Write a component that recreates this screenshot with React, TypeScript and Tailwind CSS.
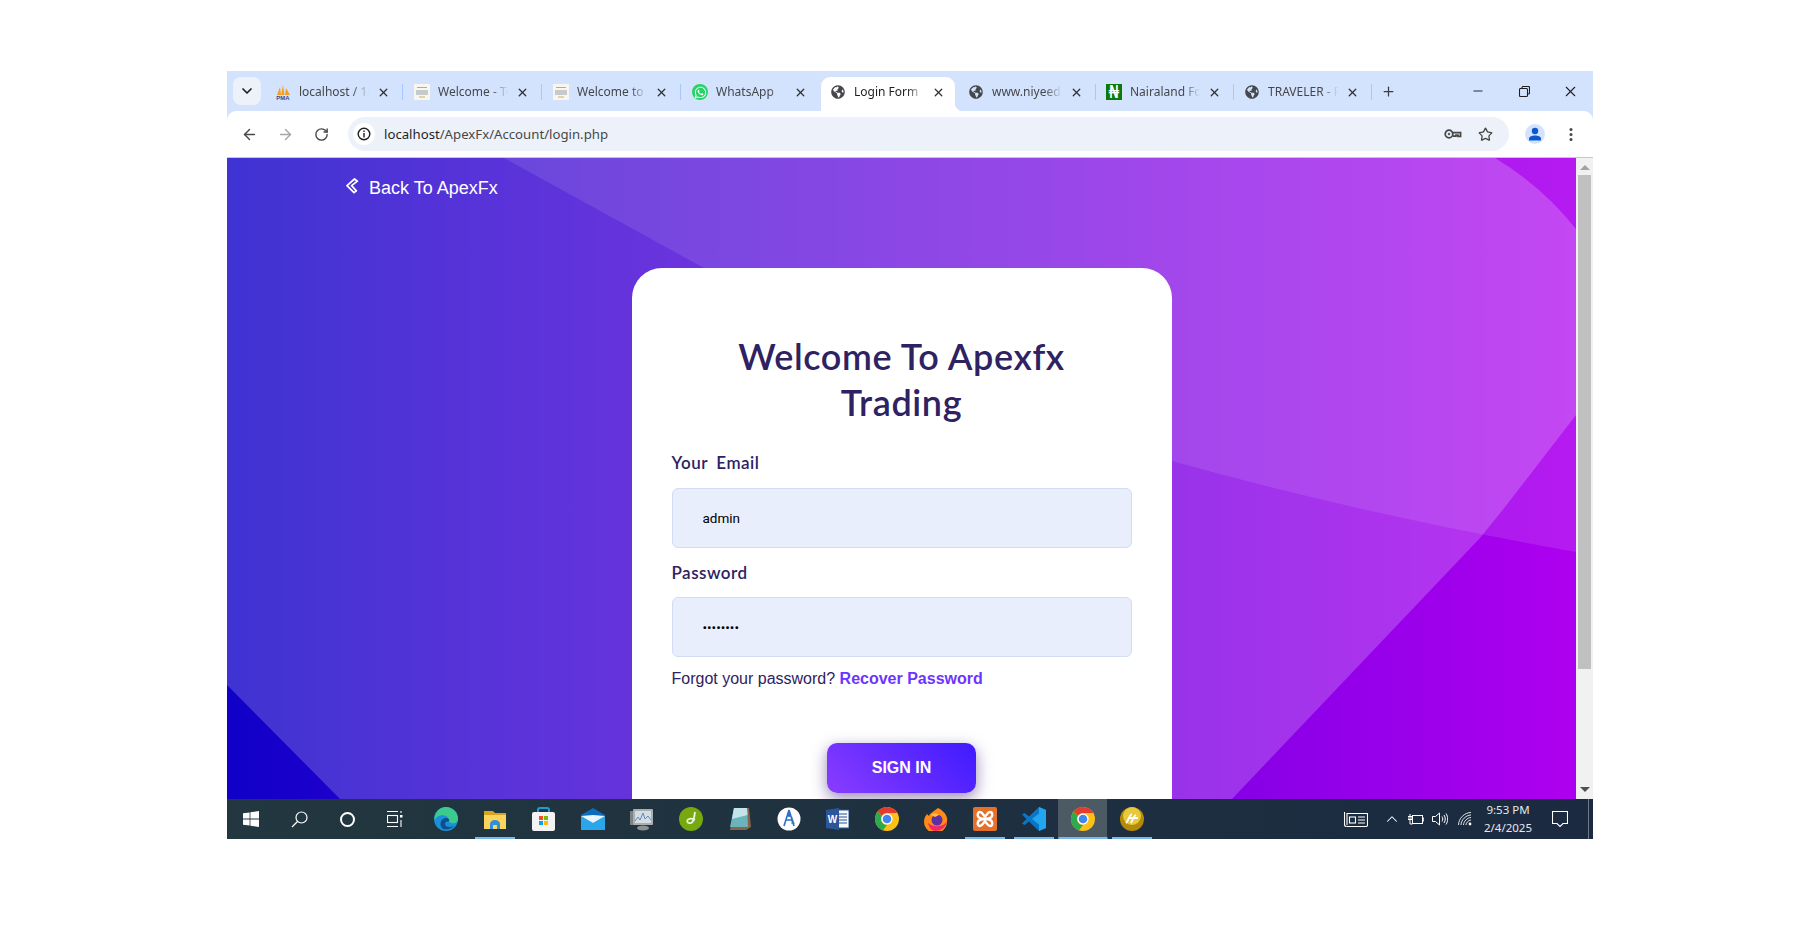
import { ArrowLeft, ArrowRight, ChevronDown, ChevronUp, EllipsisVertical, Minus, Plus, RotateCw, Star, X } from "lucide-react";
import { FaGlobeAmericas, FaWhatsapp } from "react-icons/fa";

const UI_FONT = "font-['Noto_Sans',sans-serif]";
const HEAD_FONT = "font-['Lato',sans-serif]";
const BODY_FONT = "font-['Liberation_Sans',Arial,sans-serif]";

function Globe() {
  return <FaGlobeAmericas className="h-[14px] w-[14px] text-[#45474a]" />;
}

function PmaIcon() {
  return (
    <svg width="16" height="16" viewBox="0 0 16 16">
      <path d="M2 11 L5 3 L6 11Z M6 11 L8 1 L9.5 11Z M10 11 L11 4 L15 11Z" fill="#f59e1c" />
      <text x="8" y="15.5" textAnchor="middle" fontSize="6" fontWeight="700" fill="#3b4a8c" fontFamily="Liberation Sans">PMA</text>
    </svg>
  );
}

function DocIcon() {
  return (
    <svg width="16" height="16" viewBox="0 0 16 16">
      <rect width="16" height="16" fill="#f8f6ee" />
      <rect x="3" y="3" width="10" height="1" fill="#a5adb0" />
      <rect x="2" y="6" width="12" height="5" fill="#c6cacb" />
      <rect x="5" y="12" width="6" height="2" fill="#e0d4b0" />
    </svg>
  );
}

function WhatsIcon() {
  return (
    <span className="flex h-4 w-4 items-center justify-center rounded-full bg-[#25d366]">
      <FaWhatsapp className="h-[13px] w-[13px] text-[#fff]" />
    </span>
  );
}

function NairaIcon() {
  return (
    <span className="flex h-4 w-4 items-center justify-center overflow-hidden bg-[#0a7a0a] font-['DejaVu_Sans',sans-serif] text-[17px] leading-none font-normal text-white">₦</span>
  );
}

const TABS = [
  { title: "localhost / 127.0.0.1", icon: <PmaIcon />, slot: "w-[139px]", sep: true },
  { title: "Welcome - Tourly", icon: <DocIcon />, slot: "w-[139px]", sep: true },
  { title: "Welcome to Apex", icon: <DocIcon />, slot: "w-[139px]", sep: true },
  { title: "WhatsApp", icon: <WhatsIcon />, slot: "w-[138px]", sep: false },
  { title: "Login Form | ApexFx", icon: <Globe />, slot: "w-[138px]", active: true, sep: false },
  { title: "www.niyeedesigns", icon: <Globe />, slot: "w-[138px]", sep: true },
  { title: "Nairaland Forum", icon: <NairaIcon />, slot: "w-[138px]", sep: true },
  { title: "TRAVELER - Free", icon: <Globe />, slot: "w-[138px]", sep: true },
];

function Tab({ title, icon, active, sep, slot }: { title: string; icon: React.ReactNode; active?: boolean; sep: boolean; slot: string }) {
  return (
    <div className={`relative flex h-[34px] shrink-0 items-center pb-[4px] ${slot}`}>
      {active && (
        <>
          <span className="absolute top-0 bottom-0 left-[-1px] w-[134px] rounded-t-[9px] bg-white" />
          <span className="absolute bottom-0 left-[133px] h-2 w-2 bg-[radial-gradient(circle_at_100%_0,#d3e3fd_8px,#ffffff_8.5px)]" />
        </>
      )}
      <span className="relative ml-2 flex w-4 shrink-0 items-center justify-center">{icon}</span>
      <span className={`relative ml-2 w-[70px] shrink-0 overflow-hidden text-[12px] leading-4 whitespace-nowrap [mask-image:linear-gradient(to_right,black_76%,transparent)] ${active ? "text-[#1f1f1f]" : "text-[#45474a]"} ${UI_FONT}`}>
        {title}
      </span>
      <X className="relative ml-[8px] h-[13px] w-[13px] shrink-0 text-[#2f3133]" strokeWidth={2.4} />
      {sep && <span className="relative ml-[12px] h-4 w-px shrink-0 bg-[#a8c7fa]" />}
    </div>
  );
}

function TabStrip() {
  return (
    <div className="flex h-10 items-end bg-[#d3e3fd] text-[#1f1f1f]">
      <div className="mb-[6px] ml-[6px] flex h-7 w-7 shrink-0 items-center justify-center rounded-lg bg-[#edf2fa]">
        <ChevronDown className="h-4 w-4" strokeWidth={2.6} />
      </div>
      <div className="ml-[6px] flex">
        {TABS.map((t) => (
          <Tab key={t.title} {...t} />
        ))}
      </div>
      <div className="mb-[6px] flex h-7 w-7 shrink-0 items-center justify-center">
        <Plus className="h-[15px] w-[15px] text-[#3b3d40]" strokeWidth={2} />
      </div>
      <div className="mb-[6px] ml-auto flex h-7">
        <span className="flex w-[46px] items-center justify-center"><Minus className="h-[14px] w-[14px]" strokeWidth={1.6} /></span>
        <span className="flex w-[46px] items-center justify-center">
          <svg width="11" height="11" viewBox="0 0 11 11" fill="none" stroke="#1f1f1f" strokeWidth="1.1">
            <rect x="0.5" y="2.5" width="8" height="8" rx="1" />
            <path d="M3 2.5V1.5a1 1 0 0 1 1-1h5.5a1 1 0 0 1 1 1V7a1 1 0 0 1-1 1H8.5" />
          </svg>
        </span>
        <span className="flex w-[46px] items-center justify-center"><X className="h-[17px] w-[17px]" strokeWidth={1.5} /></span>
      </div>
    </div>
  );
}

function KeyIcon() {
  return (
    <svg width="18" height="12" viewBox="0 0 18 12" fill="none" stroke="#474747" strokeWidth="1.7">
      <circle cx="5" cy="6" r="3.8" />
      <circle cx="5" cy="6" r="1" fill="#474747" strokeWidth="0.5" />
      <path d="M8.8 4.6H16.6V8.4H14V7H12V8.2H9" />
    </svg>
  );
}

function Toolbar() {
  return (
    <div className="flex h-[47px] items-center rounded-t-[9px] border-b border-[#c8c8c8] bg-white text-[#474747]">
      <span className="ml-1 flex w-9 justify-center"><ArrowLeft className="h-[17px] w-[17px]" strokeWidth={2} /></span>
      <span className="flex w-9 justify-center"><ArrowRight className="h-[17px] w-[17px] text-[#a6a6a6]" strokeWidth={2} /></span>
      <span className="flex w-9 justify-center"><RotateCw className="h-[15px] w-[15px]" strokeWidth={2.2} /></span>
      <div className="ml-[9px] flex h-[34px] flex-1 items-center rounded-full bg-[#edf2fa] pr-[16px] pl-[5px]">
        <span className="flex h-[22px] w-[22px] items-center justify-center rounded-full bg-white">
          <svg width="14" height="14" viewBox="0 0 14 14" fill="none" stroke="#1f1f1f" strokeWidth="1.4">
            <circle cx="7" cy="7" r="5.8" />
            <path d="M7 6V10.4M7 3.4V5" />
          </svg>
        </span>
        <span className={`ml-[9px] text-[13.2px] leading-5 text-[#474747] ${UI_FONT}`}>
          <span className="text-[#1f1f1f]">localhost</span>/ApexFx/Account/login.php
        </span>
        <span className="ml-auto"><KeyIcon /></span>
        <Star className="ml-[16px] h-[15px] w-[15px] text-[#474747]" strokeWidth={2.1} />
      </div>
      <span className="ml-4 flex h-5 w-5 items-center justify-center rounded-full bg-[#d3e3fd]">
        <svg width="14" height="14" viewBox="0 0 14 14" fill="#0b57d0">
          <circle cx="7" cy="4" r="3.2" />
          <path d="M1 13.5V11.6C1 9.6 4 8.5 7 8.5s6 1.1 6 3.1v1.9Z" />
        </svg>
      </span>
      <EllipsisVertical className="ml-[14px] h-[17px] w-6 text-[#474747]" strokeWidth={2.4} />
      <span className="w-[10px]" />
    </div>
  );
}

function BackgroundArt() {
  return (
    <svg className="absolute inset-0 h-full w-full" viewBox="0 0 1349 641" preserveAspectRatio="none">
      <defs>
        <linearGradient id="pageBase" x1="0" y1="0" x2="1" y2="0">
          <stop offset="0" stopColor="#1000c8" />
          <stop offset="1" stopColor="#ae00f0" />
        </linearGradient>
      </defs>
      <rect width="1349" height="641" fill="url(#pageBase)" />
      <path d="M0 0H1268Q1315 28 1349 71V257L1278 349L1253 380L1005 641H113L0 527Z" fill="#fff" fillOpacity="0.2" />
      <path d="M277 0L477 110L945 303Q1130 355 1349 394V0Z" fill="#fff" fillOpacity="0.1" />
    </svg>
  );
}

function BackChevrons() {
  return (
    <svg className="-mt-[4px]" width="13" height="16" viewBox="0 0 13 16" fill="none" stroke="#fff" strokeWidth="1.7" strokeLinejoin="round">
      <path d="M8.5 1L1 7.6L8 14.6L10.4 12.8L5.6 7.7L11.4 3.2Z" />
    </svg>
  );
}

function LoginCard() {
  const label = `block h-6 text-[17px] leading-6 font-semibold tracking-[0.5px] [word-spacing:4px] text-[#2e2262] ${HEAD_FONT}`;
  const input = "block h-[60px] w-full rounded-[6px] border border-[#d3dcf5] bg-[#e8eefc] pl-[30px] font-['Roboto',sans-serif] text-[13.5px] text-black outline-none";
  return (
    <div className="relative mx-auto mt-[50px] w-[540px] rounded-[30px] bg-white px-10 pt-[65px] pb-10">
      <h1 className={`text-center text-[36px] leading-[46px] font-semibold tracking-[0.6px] text-[#2e2262] ${HEAD_FONT}`}>
        Welcome To Apexfx
        <br />
        Trading
      </h1>
      <label className={`${label} mt-[26px] mb-[13px]`}>Your Email</label>
      <input className={input} type="text" readOnly value="admin" />
      <label className={`${label} mt-[13px] mb-3`}>Password</label>
      <input className={input} type="password" readOnly value="admin123" />
      <p className={`mt-[10px] text-[16px] leading-6 text-[#2e2262] ${BODY_FONT}`}>
        Forgot your password? <a className="font-bold text-[#6c35ff]">Recover Password</a>
      </p>
      <button className={`mx-auto mt-[52px] block h-[50px] w-[149px] rounded-[10px] bg-[linear-gradient(45deg,#8a3dff,#3f1aff)] text-[16px] font-bold text-white shadow-[0_5px_15px_rgba(50,20,110,0.5)] ${BODY_FONT}`}>
        SIGN IN
      </button>
    </div>
  );
}

function Scrollbar() {
  return (
    <div className="flex w-[17px] shrink-0 flex-col items-center bg-[#f1f1f1]">
      <span className="mt-[7px] h-0 w-0 border-x-[5px] border-b-[5px] border-x-transparent border-b-[#a3a3a3]" />
      <span className="mt-[5px] h-[494px] w-[13px] bg-[#c0c0c0]" />
      <span className="mt-auto mb-[7px] h-0 w-0 border-x-[5px] border-t-[5px] border-x-transparent border-t-[#505050]" />
    </div>
  );
}

function ChromeLogo() {
  return (
    <svg width="24" height="24" viewBox="0 0 24 24">
      <circle cx="12" cy="12" r="12" fill="#fbc116" />
      <path d="M12 0A12 12 0 0 1 22.4 6H12A6 6 0 0 0 6.8 9L2.6 4.5A12 12 0 0 1 12 0Z" fill="#e33b2e" />
      <path d="M2.6 4.5L6.8 9A6 6 0 0 0 12 18L8 23.3A12 12 0 0 1 2.6 4.5Z" fill="#2da94f" />
      <circle cx="12" cy="12" r="5.6" fill="#fff" />
      <circle cx="12" cy="12" r="4.3" fill="#3f86f4" />
    </svg>
  );
}

const APPS: { name: string; open?: boolean; active?: boolean; icon: React.ReactNode }[] = [
  {
    name: "edge",
    icon: (
      <svg width="24" height="24" viewBox="0 0 24 24">
        <circle cx="12" cy="12" r="12" fill="#1b8fd8" />
        <path d="M12 0A12 12 0 0 1 24 12C24 16 20 17 17 16C14 15 16 11 12 9C7 7 2 10 0.5 13A12 12 0 0 1 12 0Z" fill="#3ccb8c" />
        <path d="M9 22C5 19 6 12 11 11C14 10.5 16 12 15 14C14 15 11 14 11 17C11 20 16 21 20 19A12 12 0 0 1 9 22Z" fill="#0b4f8f" />
      </svg>
    ),
  },
  {
    name: "explorer",
    open: true,
    icon: (
      <svg width="22" height="20" viewBox="0 0 22 20">
        <path d="M0 2H9L11 4H22V20H0Z" fill="#d9a322" />
        <rect y="6" width="22" height="14" fill="#fcd45c" />
        <path d="M6 15C6 13 8 11 11 11S16 13 16 15V20H6Z" fill="#2f8fd8" />
        <rect x="9" y="16" width="4" height="4" fill="#fcd45c" />
      </svg>
    ),
  },
  {
    name: "store",
    icon: (
      <svg width="23" height="24" viewBox="0 0 23 24">
        <path d="M6 6V3a2 2 0 0 1 2-2h7a2 2 0 0 1 2 2v3" fill="none" stroke="#17a0d8" strokeWidth="2" />
        <rect y="5" width="23" height="19" rx="2" fill="#f3f3f3" />
        <rect x="7" y="9" width="4" height="4" fill="#f25022" />
        <rect x="12" y="9" width="4" height="4" fill="#7fba00" />
        <rect x="7" y="14" width="4" height="4" fill="#00a4ef" />
        <rect x="12" y="14" width="4" height="4" fill="#ffb900" />
      </svg>
    ),
  },
  {
    name: "mail",
    icon: (
      <svg width="24" height="22" viewBox="0 0 24 22">
        <path d="M0 7L12 0L24 7V22H0Z" fill="#0f6cbd" />
        <path d="M0 8L12 15L24 8V22H0Z" fill="#2aa7ea" />
        <path d="M0 8L12 15L24 8L12 7Z" fill="#eaf6fd" />
      </svg>
    ),
  },
  {
    name: "monitor",
    icon: (
      <svg width="23" height="23" viewBox="0 0 23 23">
        <rect y="3" width="6" height="14" fill="#7d8285" />
        <rect x="3" y="1" width="20" height="16" rx="1" fill="#a9aeb1" />
        <rect x="5" y="3" width="16" height="12" fill="#d5dde2" />
        <path d="M5 13L8 9L10 12L13 5L15 11L18 8L21 12" fill="none" stroke="#5a8fc8" strokeWidth="1" />
        <ellipse cx="13" cy="20" rx="6" ry="2.5" fill="#8c9194" />
      </svg>
    ),
  },
  {
    name: "green",
    icon: (
      <svg width="24" height="24" viewBox="0 0 24 24">
        <circle cx="12" cy="12" r="12" fill="#76a90f" />
        <path d="M16 5C15 11 15 15 12 16C8 17 7 13 10 12C12 11 14 12 16 13" fill="none" stroke="#f1f8dd" strokeWidth="1.8" />
      </svg>
    ),
  },
  {
    name: "notepad",
    icon: (
      <svg width="22" height="24" viewBox="0 0 22 24">
        <path d="M5 1H20L22 20L17 23H1Z" fill="#88654a" />
        <path d="M5 1H18L19 20H1Z" fill="#6cb4bc" />
        <path d="M5 1H18L18.5 8L3 12Z" fill="#c3e4e8" />
      </svg>
    ),
  },
  {
    name: "android",
    icon: (
      <svg width="24" height="24" viewBox="0 0 24 24">
        <circle cx="12" cy="12" r="11.5" fill="#fff" />
        <path d="M15 9L18 17H14Z" fill="#79d68c" />
        <path d="M12 3L7 19M12 3L17 19M8.5 13H15.5" fill="none" stroke="#2b6fc8" strokeWidth="1.6" />
        <circle cx="12" cy="8" r="2" fill="#2b6fc8" />
      </svg>
    ),
  },
  {
    name: "word",
    icon: (
      <svg width="23" height="22" viewBox="0 0 23 22">
        <rect x="7" y="2" width="16" height="18" fill="#f4f7fb" stroke="#2b579a" />
        <path d="M12 6H21M12 9H21M12 12H21M12 15H21" stroke="#2b579a" strokeWidth="1.2" />
        <path d="M0 2L13 0V22L0 20Z" fill="#2b579a" />
        <text x="6.5" y="15" textAnchor="middle" fontSize="10" fontWeight="700" fill="#fff" fontFamily="Liberation Sans">W</text>
      </svg>
    ),
  },
  { name: "chrome", icon: <ChromeLogo /> },
  {
    name: "firefox",
    icon: (
      <svg width="24" height="24" viewBox="0 0 24 24">
        <path d="M14 1C20 4 24 9 23 14A11.5 11.5 0 1 1 1 10L3 7L5 9C6 6 9 5 14 1Z" fill="#ff8a16" />
        <path d="M12 24A11.5 11.5 0 0 0 23 14C20 20 10 21 4 16C5 21 8 24 12 24Z" fill="#f0276d" />
        <circle cx="13" cy="13" r="5.5" fill="#5b2fa8" />
        <path d="M7 8C9 6 13 6 15 8L11 10Z" fill="#ffbd3c" />
      </svg>
    ),
  },
  {
    name: "xampp",
    open: true,
    icon: (
      <svg width="24" height="24" viewBox="0 0 24 24">
        <rect width="24" height="24" rx="2" fill="#e4702a" />
        <path d="M7 5C4 5 4 10 7 11L12 13L17 11C20 10 20 5 17 5C14 5 14 9 12 9C10 9 10 5 7 5ZM7 19C4 19 4 14 7 13L12 11L17 13C20 14 20 19 17 19C14 19 14 15 12 15C10 15 10 19 7 19Z" fill="none" stroke="#fff" strokeWidth="2.4" />
      </svg>
    ),
  },
  {
    name: "vscode",
    open: true,
    icon: (
      <svg width="24" height="24" viewBox="0 0 24 24">
        <path d="M17 0L24 3V21L17 24L7 14.5L2.5 18L0 16.5L4.5 12L0 7.5L2.5 6L7 9.5Z" fill="#0b77c4" />
        <path d="M17 0L24 3V21L17 24V17.5L10 12L17 6.5Z" fill="#22a6f0" />
      </svg>
    ),
  },
  { name: "chrome-active", open: true, active: true, icon: <ChromeLogo /> },
  {
    name: "gold",
    open: true,
    icon: (
      <svg width="24" height="24" viewBox="0 0 24 24">
        <circle cx="12" cy="12" r="12" fill="#b58a08" />
        <circle cx="12" cy="9" r="9" fill="#e6c93c" />
        <path d="M6 16C9 13 9 8 12 7M11 16C13 13 13 9 16 8M8 11H13M13 11H18" fill="none" stroke="#fff" strokeWidth="1.8" />
      </svg>
    ),
  },
];

function Taskbar() {
  const glyph = "flex h-10 w-12 shrink-0 items-center justify-center";
  return (
    <div className="flex h-10 shrink-0 items-stretch bg-[linear-gradient(90deg,#22373f,#1e3040_55%,#1b2a40)] text-white">
      <span className={glyph}>
        <svg width="16" height="16" viewBox="0 0 16 16" fill="#fff">
          <path d="M0 2.3L6.6 1.4V7.5H0ZM7.4 1.3L16 0V7.5H7.4ZM0 8.5H6.6V14.6L0 13.7ZM7.4 8.5H16V16L7.4 14.7Z" />
        </svg>
      </span>
      <span className={glyph}>
        <svg width="17" height="17" viewBox="0 0 17 17" fill="none" stroke="#fff" strokeWidth="1.2">
          <circle cx="10.5" cy="6.5" r="5.5" />
          <path d="M6.5 10.5L1 16" />
        </svg>
      </span>
      <span className={glyph}><span className="h-[15px] w-[15px] rounded-full border-2 border-white" /></span>
      <span className={glyph}>
        <svg width="16" height="16" viewBox="0 0 16 16" fill="none" stroke="#fff" strokeWidth="1.1">
          <path d="M0 0.5H11M0 15.5H11" />
          <rect x="0.5" y="4.5" width="10" height="7" />
          <rect x="13" y="4" width="2.5" height="2.5" fill="#fff" stroke="none" />
          <path d="M14 0V2M14 9V16" />
        </svg>
      </span>
      <div className="ml-[2px] flex">
        {APPS.map((app) => (
          <span key={app.name} className={`relative flex h-10 w-[49px] items-center justify-center ${app.active ? "bg-[#4c5a64]" : ""}`}>
            {app.icon}
            {app.open && <span className={`absolute bottom-0 left-1/2 h-[2px] -translate-x-1/2 bg-[#76b9ed] ${app.active ? "w-full" : "w-10"}`} />}
          </span>
        ))}
      </div>
      <div className="ml-auto flex items-center">
        <svg width="24" height="16" viewBox="0 0 24 16" fill="none" stroke="#fff" strokeWidth="1.1">
          <path d="M2.5 15.5H22a1.5 1.5 0 0 0 1.5-1.5V2.5H3V14" />
          <path d="M0.5 1V13.5a2 2 0 0 0 2 2" />
          <rect x="5.5" y="6" width="6" height="6" />
          <path d="M14 6H21M14 9H21M14 12H21" />
        </svg>
        <ChevronUp className="ml-[15px] h-[18px] w-[18px]" strokeWidth={1.4} />
        <svg className="ml-[7px]" width="16" height="12" viewBox="0 0 16 12" fill="none" stroke="#fff" strokeWidth="1">
          <rect x="4.5" y="2.5" width="10" height="8" />
          <path d="M14.5 5H15.8V8H14.5M0 3.5H4M0 6.5H4M2 1V3M1 3.5V6C1 7.5 3 7.5 3 6V3.5M2 7.5V11H4.5" />
        </svg>
        <svg className="ml-[8px]" width="16" height="14" viewBox="0 0 16 14" fill="none" stroke="#fff" strokeWidth="1">
          <path d="M0.5 4.5H3.5L7.5 1V13L3.5 9.5H0.5Z" />
          <path d="M10 4.5C11 6 11 8 10 9.5M12 3C13.7 5.5 13.7 8.5 12 11M14 1.5C16.3 5 16.3 9 14 12.5" />
        </svg>
        <svg className="ml-[10px]" width="14" height="14" viewBox="0 0 14 14" fill="none" stroke="#dfe3e6" strokeWidth="1">
          <path d="M0.5 13C0.5 6.5 6.5 0.5 13 0.5" />
          <path d="M3 13C3 8 8 3 13 3" />
          <path d="M5.5 13C5.5 9.5 9.5 5.5 13 5.5" />
          <path d="M8 13C8 10.8 10.5 8 13 8" />
          <circle cx="12" cy="12" r="1.4" fill="#fff" stroke="none" />
        </svg>
        <div className={`ml-[4px] w-[64px] text-center text-[11.5px] leading-[18px] text-[#e6e9eb] ${UI_FONT}`}>
          <div>9:53 PM</div>
          <div>2/4/2025</div>
        </div>
        <svg className="ml-[12px]" width="16" height="16" viewBox="0 0 16 16" fill="none" stroke="#fff" strokeWidth="1.1">
          <path d="M0.5 0.5H15.5V12.5H11L8 15.5L5 12.5H0.5Z" />
        </svg>
        <span className="ml-[20px] h-10 w-px bg-[#6d7a85]" />
        <span className="w-[4px]" />
      </div>
    </div>
  );
}

export default function App() {
  return (
    <div className="h-[926px] w-[1819px] overflow-hidden bg-white pt-[71px] pl-[227px]">
      <div className="flex h-[768px] w-[1366px] flex-col bg-[#d3e3fd]">
        <TabStrip />
        <Toolbar />
        <div className="flex min-h-0 flex-1">
          <main className="relative min-w-0 flex-1 overflow-hidden">
            <BackgroundArt />
            <div className="relative flex h-[60px] items-center pl-[119px] text-white">
              <BackChevrons />
              <span className={`ml-[10px] text-[18px] leading-6 ${BODY_FONT}`}>Back To ApexFx</span>
            </div>
            <LoginCard />
          </main>
          <Scrollbar />
        </div>
        <Taskbar />
      </div>
    </div>
  );
}
